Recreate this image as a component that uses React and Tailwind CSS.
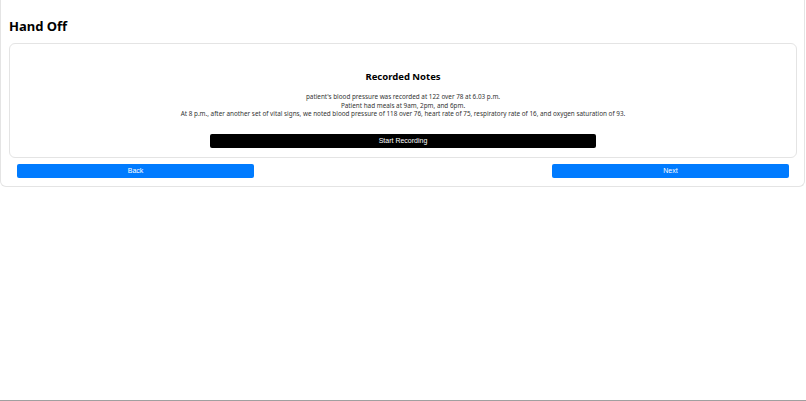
export default function App() {
  return (
    <div className="h-[401px] w-[806px] flex flex-col bg-white" style={{ fontFamily: '"Noto Sans", "Open Sans", sans-serif' }}>
      <div className="w-[805px] border-x border-b border-[#e4e4e4] rounded-b-[6px] pl-[8px] pr-[7px] pb-[8px] pt-[16px]">
        <h1 className="text-[13px] leading-[20px] font-bold text-black">Hand Off</h1>
        <div className="mt-[7px] border border-[#e4e4e4] rounded-[6px] pt-[25px] pb-[9px] flex flex-col items-center">
          <h2 className="text-[9.5px] leading-[16px] font-bold text-black">Recorded Notes</h2>
          <div className="mt-[8px] text-center text-[6.35px] leading-[8.5px] text-[#333]">
            <p>patient's blood pressure was recorded at 122 over 78 at 6.03 p.m.</p>
            <p>Patient had meals at 9am, 2pm, and 6pm.</p>
            <p>At 8 p.m., after another set of vital signs, we noted blood pressure of 118 over 76, heart rate of 75, respiratory rate of 16, and oxygen saturation of 93.</p>
          </div>
          <button className="mt-[15px] w-[386px] h-[14px] rounded-[2px] bg-black text-white text-[7px] leading-[14px]" style={{ fontFamily: '"Liberation Sans", Arial, sans-serif' }}>Start Recording</button>
        </div>
        <div className="mt-[6px] px-[8px] flex justify-between">
          <button className="w-[237px] h-[14px] rounded-[2px] bg-[#007bff] text-white text-[7px] leading-[14px]" style={{ fontFamily: '"Liberation Sans", Arial, sans-serif' }}>Back</button>
          <button className="w-[237px] h-[14px] rounded-[2px] bg-[#007bff] text-white text-[7px] leading-[14px]" style={{ fontFamily: '"Liberation Sans", Arial, sans-serif' }}>Next</button>
        </div>
      </div>
      <div className="flex-1" />
      <div className="h-px bg-[#a0a0a0]" />
    </div>
  );
}
